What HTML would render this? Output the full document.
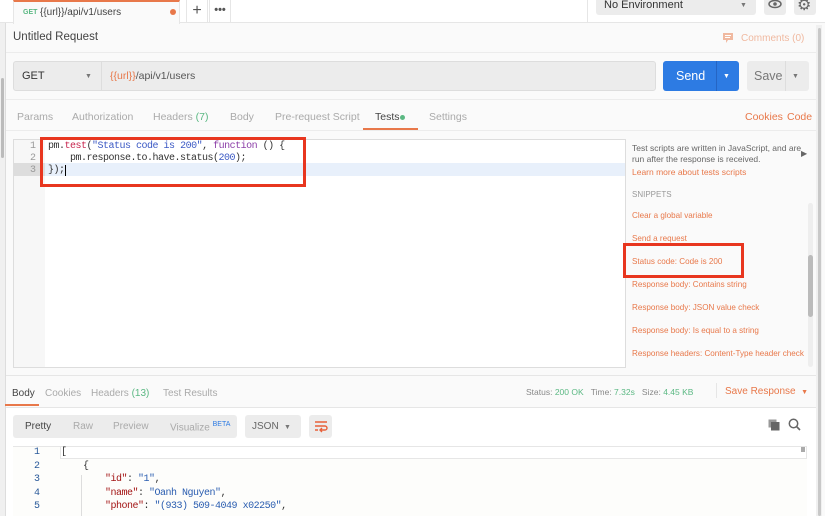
<!DOCTYPE html>
<html><head><meta charset="utf-8"><style>
*{margin:0;padding:0;box-sizing:border-box}
body{width:825px;height:516px;overflow:hidden;background:#fafafa;font-family:"Liberation Sans",sans-serif;font-size:11px;color:#808080;position:relative}
.a{position:absolute;white-space:nowrap}
.mono{font-family:"Liberation Mono",monospace;font-size:10px;letter-spacing:-0.5px}
.or{color:#e8784a}
.gr{color:#5bb883}
</style></head><body>
<div class="a" style="left:0;top:0;width:825px;height:23px;background:#fff;border-bottom:1px solid #e6e6e6"></div>
<div class="a" style="left:13px;top:0;width:167px;height:24px;background:#fafafa;border-top:2px solid #e8784a;border-left:1px solid #e6e6e6;border-right:1px solid #e6e6e6"></div>
<div class="a gr" style="left:23px;top:9px;font-size:7px;font-weight:bold">GET</div>
<div class="a" style="left:40px;top:7px;font-size:10px;color:#444">{{url}}/api/v1/users</div>
<div class="a" style="left:170px;top:9px;width:6px;height:6px;border-radius:50%;background:#e8784a"></div>
<div class="a" style="left:186px;top:0;width:22px;height:23px;border:1px solid #e6e6e6;border-top:0;text-align:center;font-size:16px;line-height:22px;color:#555">+</div>
<div class="a" style="left:209px;top:0;width:22px;height:23px;border:1px solid #e6e6e6;border-top:0;text-align:center;font-size:11px;line-height:20px;color:#555;font-weight:bold">•••</div>
<div class="a" style="left:587px;top:0;width:1px;height:23px;background:#e6e6e6"></div>
<div class="a" style="left:596px;top:0;width:160px;height:15px;background:#ececec;border-radius:0 0 3px 3px"></div>
<div class="a" style="left:604px;top:-1px;font-size:11px;color:#333">No Environment</div>
<div class="a" style="left:740px;top:2px;font-size:7px;color:#777">▼</div>
<div class="a" style="left:764px;top:0;width:22px;height:15px;background:#ececec;border-radius:0 0 3px 3px"></div>
<svg class="a" style="left:768px;top:0" width="14" height="10"><ellipse cx="7" cy="4" rx="6" ry="3.5" fill="none" stroke="#666" stroke-width="1.5"/><circle cx="7" cy="4" r="1.8" fill="#666"/></svg>
<div class="a" style="left:794px;top:0;width:22px;height:15px;background:#ececec;border-radius:0 0 3px 3px"></div>
<div class="a" style="left:797px;top:-5px;font-size:16px;color:#666">⚙</div>
<div class="a" style="left:0;top:23px;width:6px;height:493px;background:#f0f0f0;border-right:1px solid #ddd"></div>
<div class="a" style="left:1px;top:78px;width:3px;height:80px;background:#bbb;border-radius:2px"></div>
<div class="a" style="left:816px;top:25px;width:6px;height:491px;background:#f0f0f0"></div>
<div class="a" style="left:818px;top:28px;width:3px;height:488px;background:#c8c8c8;border-radius:2px"></div>
<div class="a" style="left:13px;top:31px;font-size:11.5px;color:#444">Untitled Request</div>
<svg class="a" style="left:722px;top:32px" width="12" height="12"><path d="M1 1h10v7H6l-2 3V8H1z" fill="#f0b9a0"/><path d="M3 3.5h6M3 5.5h5" stroke="#fff" stroke-width="1"/></svg>
<div class="a" style="left:741px;top:33px;font-size:10px;color:#f0b9a0">Comments (0)</div>
<div class="a" style="left:6px;top:52px;width:810px;height:1px;background:#ececec"></div>
<div class="a" style="left:13px;top:61px;width:643px;height:30px;background:#ececec;border:1px solid #ddd;border-radius:3px"></div>
<div class="a" style="left:101px;top:62px;width:1px;height:28px;background:#ddd"></div>
<div class="a" style="left:22px;top:70px;font-size:11px;color:#333">GET</div>
<div class="a" style="left:85px;top:73px;font-size:7px;color:#777">▼</div>
<div class="a" style="left:110px;top:70px;font-size:10.5px;color:#555"><span class="or">{{url}}</span>/api/v1/users</div>
<div class="a" style="left:663px;top:61px;width:76px;height:30px;background:#2d7be3;border-radius:3px"></div>
<div class="a" style="left:716px;top:61px;width:1px;height:30px;background:#2565c4"></div>
<div class="a" style="left:676px;top:69px;font-size:12.5px;color:#fff">Send</div>
<div class="a" style="left:723px;top:73px;font-size:7px;color:#fff">▼</div>
<div class="a" style="left:747px;top:61px;width:62px;height:30px;background:#ececec;border-radius:3px"></div>
<div class="a" style="left:785px;top:61px;width:1px;height:30px;background:#ddd"></div>
<div class="a" style="left:754px;top:69px;font-size:12.5px;color:#777">Save</div>
<div class="a" style="left:792px;top:73px;font-size:7px;color:#777">▼</div>
<div class="a" style="left:6px;top:99px;width:810px;height:1px;background:#ececec"></div>
<div class="a" style="left:17px;top:111px;font-size:10.5px;color:#aaa">Params</div>
<div class="a" style="left:72px;top:111px;font-size:10.5px;color:#aaa">Authorization</div>
<div class="a" style="left:153px;top:111px;font-size:10.5px;color:#aaa">Headers <span class="gr">(7)</span></div>
<div class="a" style="left:230px;top:111px;font-size:10.5px;color:#aaa">Body</div>
<div class="a" style="left:275px;top:111px;font-size:10.5px;color:#aaa">Pre-request Script</div>
<div class="a" style="left:375px;top:111px;font-size:10.5px;color:#444">Tests</div>
<div class="a" style="left:400px;top:115px;width:5px;height:5px;border-radius:50%;background:#5bb883"></div>
<div class="a" style="left:363px;top:128px;width:55px;height:2px;background:#e8784a"></div>
<div class="a" style="left:429px;top:111px;font-size:10.5px;color:#aaa">Settings</div>
<div class="a or" style="left:745px;top:111px;font-size:10.5px">Cookies</div>
<div class="a or" style="left:787px;top:111px;font-size:10.5px">Code</div>
<div class="a" style="left:6px;top:130px;width:810px;height:1px;background:#ececec"></div>
<div class="a" style="left:13px;top:139px;width:613px;height:229px;background:#fff;border:1px solid #ddd"></div>
<div class="a" style="left:14px;top:140px;width:31px;height:227px;background:#f7f7f7"></div>
<div class="a" style="left:14px;top:163px;width:611px;height:13px;background:#e8f0fb"></div>
<div class="a" style="left:14px;top:163px;width:31px;height:13px;background:#ddd"></div>
<div class="a mono" style="left:30px;top:141px;line-height:12px;color:#999;letter-spacing:0">1<br>2<br>3</div>
<div class="a mono" style="left:48px;top:141px;line-height:12px;color:#333">pm.<span style="color:#c7254e">test</span>(<span style="color:#3b59c4">"Status code is 200"</span>, <span style="color:#8c3fa8">function</span> () {<br>&nbsp;&nbsp;&nbsp;&nbsp;pm.response.to.have.status(<span style="color:#3b59c4">200</span>);<br>});<span style="border-left:1px solid #000"></span></div>
<div class="a" style="left:40px;top:137px;width:266px;height:50px;border:3px solid #e8361f"></div>
<div class="a" style="left:632px;top:143px;font-size:8.5px;line-height:11px;color:#666">Test scripts are written in JavaScript, and are<br>run after the response is received.</div>
<div class="a" style="left:801px;top:149px;font-size:8px;color:#666">▶</div>
<div class="a or" style="left:632px;top:167px;font-size:8.5px">Learn more about tests scripts</div>
<div class="a" style="left:632px;top:190px;font-size:8px;color:#999">SNIPPETS</div>
<div class="a or" style="left:632px;top:204px;font-size:8.1px;line-height:23px">Clear a global variable<br>Send a request<br>Status code: Code is 200<br>Response body: Contains string<br>Response body: JSON value check<br>Response body: Is equal to a string<br>Response headers: Content-Type header check</div>
<div class="a" style="left:623px;top:243px;width:121px;height:35px;border:3px solid #e8361f"></div>
<div class="a" style="left:808px;top:203px;width:5px;height:164px;background:#eee;border-radius:3px"></div>
<div class="a" style="left:808px;top:255px;width:5px;height:62px;background:#bbb;border-radius:3px"></div>
<div class="a" style="left:6px;top:375px;width:810px;height:1px;background:#e6e6e6"></div>
<div class="a" style="left:12px;top:388px;font-size:10px;color:#444">Body</div>
<div class="a" style="left:5px;top:404px;width:34px;height:2px;background:#e8784a"></div>
<div class="a" style="left:45px;top:388px;font-size:10px;color:#aaa">Cookies</div>
<div class="a" style="left:91px;top:388px;font-size:10px;color:#aaa">Headers <span class="gr">(13)</span></div>
<div class="a" style="left:163px;top:388px;font-size:10px;color:#aaa">Test Results</div>
<div class="a" style="left:526px;top:387px;font-size:8.5px;color:#888">Status: <span class="gr">200 OK</span>&nbsp;&nbsp;&nbsp;Time: <span class="gr">7.32s</span>&nbsp;&nbsp;&nbsp;Size: <span class="gr">4.45 KB</span></div>
<div class="a" style="left:716px;top:383px;width:1px;height:15px;background:#e6e6e6"></div>
<div class="a or" style="left:725px;top:386px;font-size:10px">Save Response&nbsp;&nbsp;<span style="font-size:7px">▼</span></div>
<div class="a" style="left:6px;top:407px;width:810px;height:1px;background:#e6e6e6"></div>
<div class="a" style="left:6px;top:408px;width:810px;height:108px;background:#fff"></div>
<div class="a" style="left:13px;top:415px;width:224px;height:23px;background:#ececec;border-radius:3px"></div>
<div class="a" style="left:25px;top:421px;font-size:10px;color:#444">Pretty</div>
<div class="a" style="left:73px;top:421px;font-size:10px;color:#aaa">Raw</div>
<div class="a" style="left:113px;top:421px;font-size:10px;color:#aaa">Preview</div>
<div class="a" style="left:170px;top:421px;font-size:10px;color:#aaa">Visualize <sup style="font-size:7px;color:#2d7be3">BETA</sup></div>
<div class="a" style="left:245px;top:415px;width:56px;height:23px;background:#ececec;border-radius:3px"></div>
<div class="a" style="left:252px;top:421px;font-size:10px;color:#666">JSON</div>
<div class="a" style="left:284px;top:424px;font-size:7px;color:#777">▼</div>
<div class="a" style="left:309px;top:415px;width:23px;height:23px;background:#ececec;border-radius:3px"></div>
<svg class="a" style="left:314px;top:420px" width="14" height="13"><path d="M1 2h12M1 6h10a2 2 0 0 1 0 4H7M1 10h3M8 8l-2 2 2 2" fill="none" stroke="#e8603a" stroke-width="1.4"/></svg>
<svg class="a" style="left:768px;top:419px" width="12" height="12"><rect x="0.5" y="0.5" width="8" height="8" fill="#999"/><rect x="3" y="3" width="8.5" height="8.5" fill="#666"/></svg>
<svg class="a" style="left:788px;top:418px" width="13" height="13"><circle cx="5.5" cy="5.5" r="4.2" fill="none" stroke="#666" stroke-width="1.5"/><path d="M8.5 8.5l3.5 3.5" stroke="#666" stroke-width="1.6"/></svg>
<div class="a" style="left:13px;top:446px;width:794px;height:70px;background:#fdfdfb;border-top:1px solid #e6e6e6"></div>
<div class="a" style="left:60px;top:446px;width:747px;height:13px;background:#fff;border:1px solid #e6e6e6"></div>
<div class="a" style="left:801px;top:447px;width:4px;height:5px;background:#aaa"></div>
<div class="a mono" style="left:34px;top:446px;line-height:13.5px;color:#2a5a9a;letter-spacing:0">1<br>2<br>3<br>4<br>5</div>
<div class="a mono" style="left:61px;top:446px;line-height:13.5px;color:#333">[<br>&nbsp;&nbsp;&nbsp;&nbsp;{<br>&nbsp;&nbsp;&nbsp;&nbsp;&nbsp;&nbsp;&nbsp;&nbsp;<span style="color:#a31515">"id"</span>: <span style="color:#2a5db0">"1"</span>,<br>&nbsp;&nbsp;&nbsp;&nbsp;&nbsp;&nbsp;&nbsp;&nbsp;<span style="color:#a31515">"name"</span>: <span style="color:#2a5db0">"Oanh Nguyen"</span>,<br>&nbsp;&nbsp;&nbsp;&nbsp;&nbsp;&nbsp;&nbsp;&nbsp;<span style="color:#a31515">"phone"</span>: <span style="color:#2a5db0">"(933) 509-4049 x02250"</span>,</div>
<div class="a" style="left:81px;top:475px;width:1px;height:41px;background:#ddd"></div>
</body></html>
